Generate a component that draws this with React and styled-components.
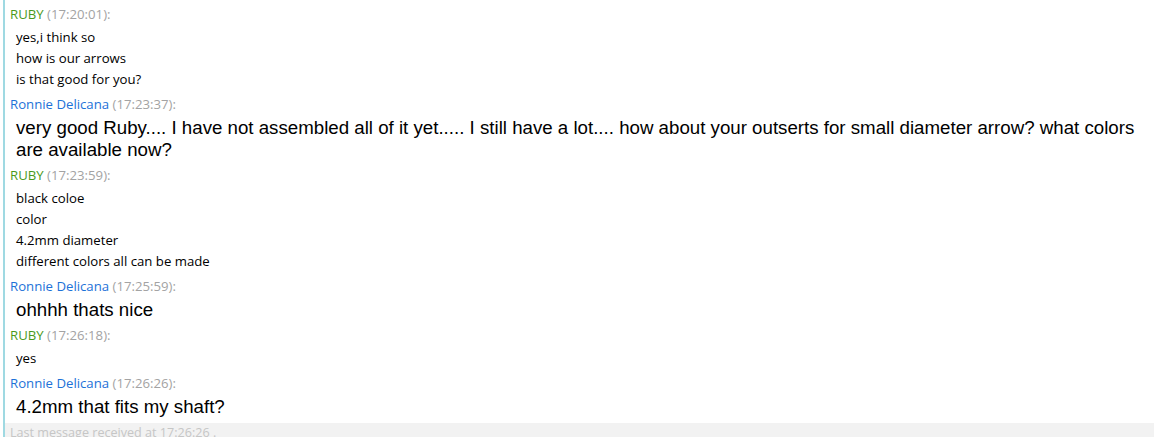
import React from "react";
import styled, { createGlobalStyle } from "styled-components";

const GlobalStyle = createGlobalStyle`
  html, body {
    margin: 0;
    padding: 0;
    background: #ffffff;
    overflow: hidden;
  }
`;

const Log = styled.div`
  display: flex;
  flex-direction: column;
  height: 437px;
  margin-left: 3px;
  border-left: 2px solid #9fd9e2;
  font-family: "Open Sans", "Noto Sans", sans-serif;
`;

const Messages = styled.div`
  flex: 1;
  padding: 4px 0 0 5px;
`;

const Group = styled.div`
  margin-bottom: 4px;
`;

const Header = styled.div`
  font-size: 13.2px;
  line-height: 21px;
  color: ${({ $who }) => ($who === "ruby" ? "#4a9a1c" : "#1d72d8")};
`;

const Time = styled.span`
  color: #a3a3a3;
`;

const Body = styled.div`
  margin-top: 2px;
  padding-left: 6px;
  color: #000;
  font-family: ${({ $big }) =>
    $big ? '"Liberation Sans", Arial, sans-serif' : '"Open Sans", "Noto Sans", sans-serif'};
  font-size: ${({ $big }) => ($big ? "18.7px" : "13.2px")};
  line-height: ${({ $big }) => ($big ? "22px" : "21px")};
`;

const Footer = styled.div`
  box-sizing: border-box;
  flex: none;
  height: 14px;
  padding: 1px 0 0 5px;
  background: #f2f2f2;
  color: #c6c6c6;
  font-size: 12.6px;
  line-height: 18px;
  overflow: hidden;
`;

const chat = [
  { who: "ruby", name: "RUBY", time: "17:20:01", lines: ["yes,i think so", "how is our arrows", "is that good for you?"] },
  {
    who: "ronnie",
    name: "Ronnie Delicana",
    time: "17:23:37",
    big: true,
    lines: [
      "very good Ruby.... I have not assembled all of it yet..... I still have a lot.... how about your outserts for small diameter arrow? what colors are available now?",
    ],
  },
  { who: "ruby", name: "RUBY", time: "17:23:59", lines: ["black coloe", "color", "4.2mm diameter", "different colors all can be made"] },
  { who: "ronnie", name: "Ronnie Delicana", time: "17:25:59", big: true, lines: ["ohhhh thats nice"] },
  { who: "ruby", name: "RUBY", time: "17:26:18", lines: ["yes"] },
  { who: "ronnie", name: "Ronnie Delicana", time: "17:26:26", big: true, lines: ["4.2mm that fits my shaft?"] },
];

const App = () => (
  <>
    <GlobalStyle />
    <Log>
      <Messages>
        {chat.map((m, i) => (
          <Group key={i}>
            <Header $who={m.who}>
              {m.name} <Time>({m.time}):</Time>
            </Header>
            <Body $big={m.big}>
              {m.lines.map((l, j) => (
                <div key={j}>{l}</div>
              ))}
            </Body>
          </Group>
        ))}
      </Messages>
      <Footer>Last message received at 17:26:26 .</Footer>
    </Log>
  </>
);

export default App;
